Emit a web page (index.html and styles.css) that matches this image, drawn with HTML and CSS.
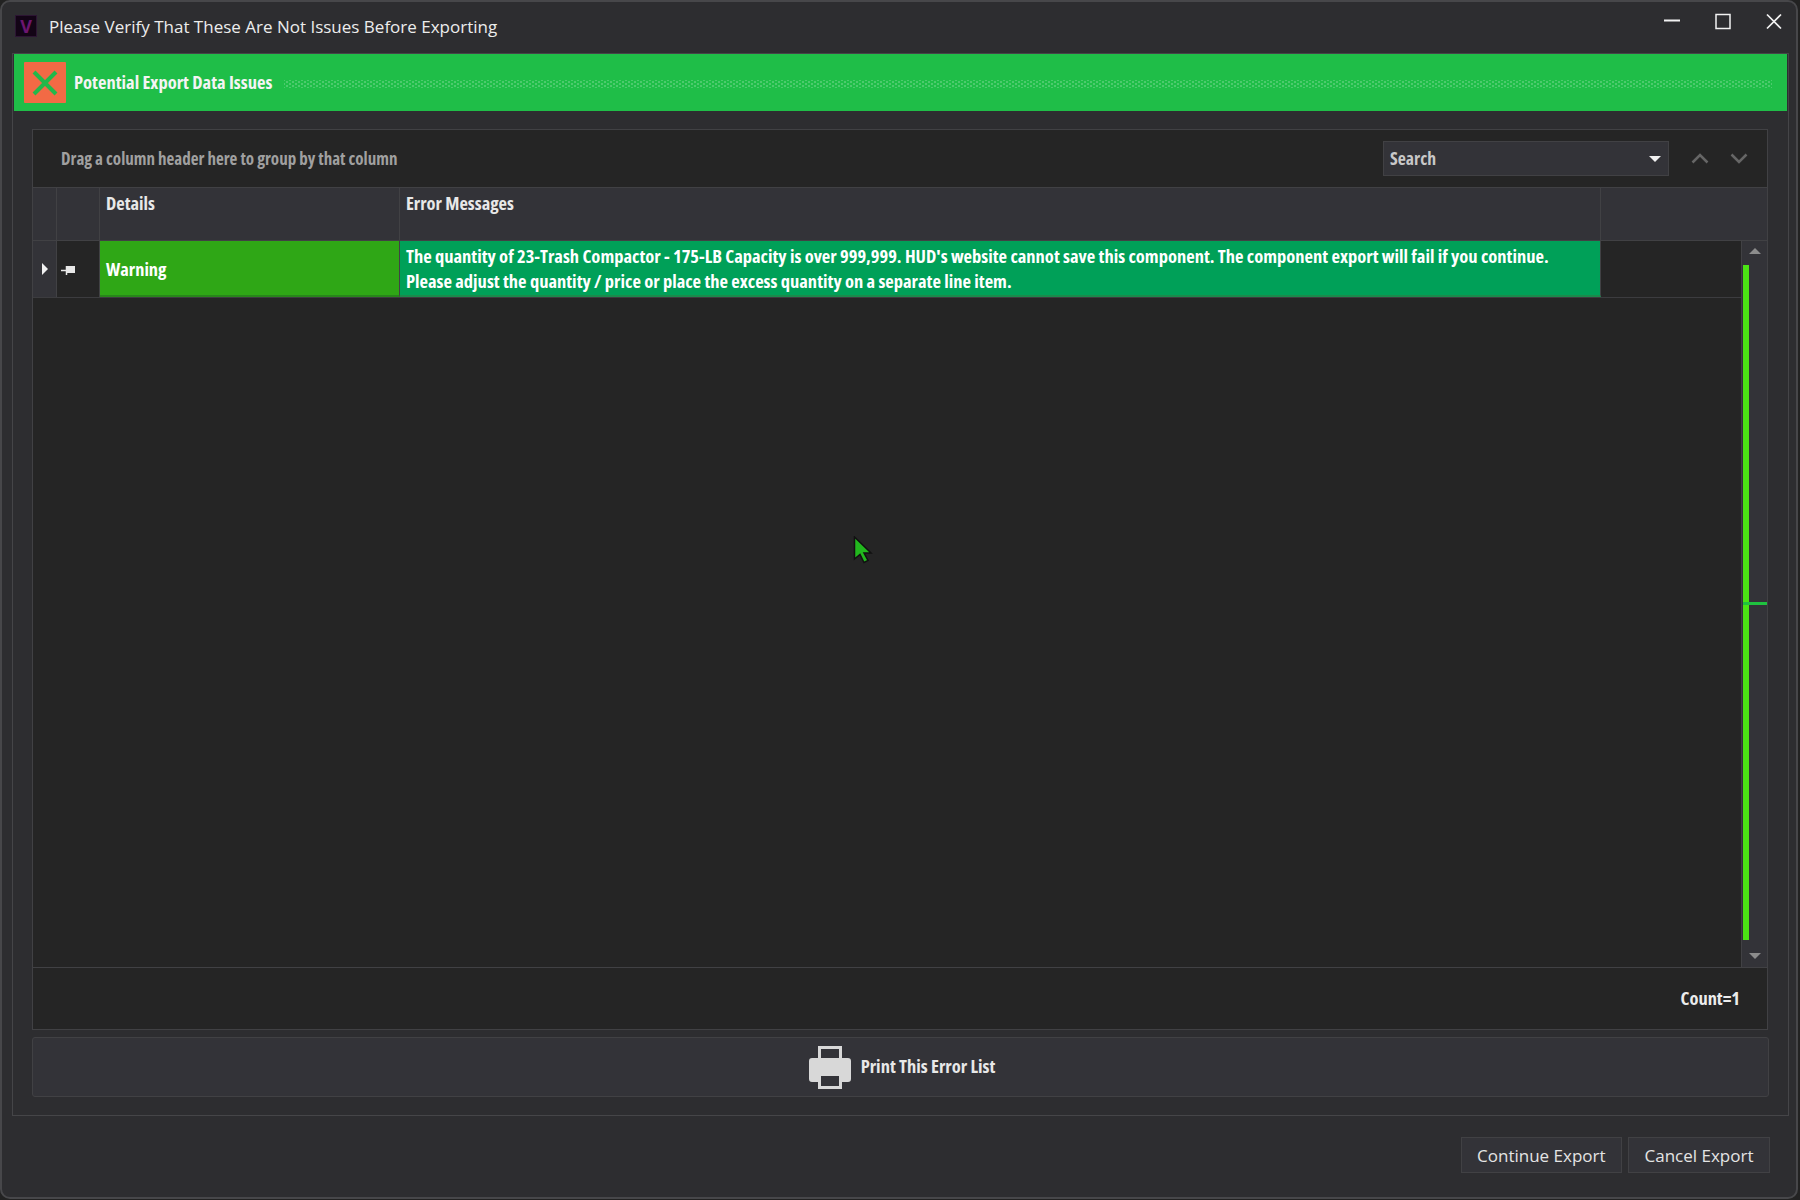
FILE: index.html
```html
<!DOCTYPE html>
<html lang="en">
<head>
  <meta charset="UTF-8">
  <meta name="viewport" content="width=device-width, initial-scale=1.0">
  <title>Please Verify That These Are Not Issues Before Exporting</title>
  <link rel="stylesheet" href="styles.css">
</head>
<body>
  <div class="window">
    <div class="titlebar">
      <div class="app-icon">V</div>
      <div class="title-text">Please Verify That These Are Not Issues Before Exporting</div>
      <div class="window-controls">
        <svg width="44" height="30" viewBox="0 0 44 30"><path d="M14 20.500h16" stroke="#f2f2f2" stroke-width="2"/></svg>
        <svg width="44" height="30" viewBox="0 0 44 30"><rect x="15" y="14.500" width="14" height="14" fill="none" stroke="#f2f2f2" stroke-width="1.500"/></svg>
        <svg width="44" height="30" viewBox="0 0 44 30"><path d="M15 14.500l14 14M29 14.500l-14 14" stroke="#f2f2f2" stroke-width="1.700"/></svg>
      </div>
    </div>

    <div class="content-panel">
      <div class="banner">
        <div class="banner-icon">
          <svg width="26" height="26" viewBox="0 0 26 26"><path d="M2 2l22 22M24 2L2 24" stroke="#22b84a" stroke-width="4"/></svg>
        </div>
        <div class="banner-title">Potential Export Data Issues</div>
        <div class="banner-dots"></div>
      </div>

      <div class="grid-panel">
        <div class="group-row">
          <span class="group-hint">Drag a column header here to group by that column</span>
          <div class="search-box">
            <span class="search-label">Search</span>
            <span class="search-caret"></span>
          </div>
          <div class="search-nav">
            <svg width="18" height="11" viewBox="0 0 18 11"><path d="M1.500 9.500L9 2l7.500 7.500" fill="none" stroke="#666" stroke-width="2.500"/></svg>
            <svg width="18" height="11" viewBox="0 0 18 11"><path d="M1.500 1.500L9 9l7.500-7.500" fill="none" stroke="#666" stroke-width="2.500"/></svg>
          </div>
        </div>

        <div class="grid-head">
          <div class="cell-expand"></div>
          <div class="cell-pin"></div>
          <div class="cell-details">Details</div>
          <div class="cell-message">Error Messages</div>
          <div class="cell-rest"></div>
        </div>

        <div class="grid-body">
          <div class="rows">
            <div class="row">
              <div class="cell-expand"><span class="expand-arrow"></span></div>
              <div class="cell-pin">
                <svg width="15" height="11" viewBox="0 0 15 11"><path d="M0 5.500h6M5.500 1v9" stroke="#e8e8e8" stroke-width="1.500"/><rect x="6" y="1" width="8" height="7" fill="#e8e8e8"/></svg>
              </div>
              <div class="cell-details warning">Warning</div>
              <div class="cell-message error">The quantity of 23-Trash Compactor - 175-LB Capacity is over 999,999. HUD's website cannot save this component. The component export will fail if you continue.<br>Please adjust the quantity / price or place the excess quantity on a separate line item.</div>
            </div>
          </div>
          <div class="scrollbar">
            <span class="scroll-up"></span>
            <div class="scroll-thumb"></div>
            <span class="scroll-down"></span>
            <div class="scroll-tick"></div>
          </div>
        </div>

        <div class="grid-foot">Count=1</div>
      </div>

      <button class="print-btn" type="button">
        <svg width="42" height="43" viewBox="0 0 42 43">
          <path d="M10.500 12V1.500h21V12" fill="none" stroke="#d8d8d8" stroke-width="3"/>
          <path d="M3 12h36a3 3 0 0 1 3 3v18a3 3 0 0 1-3 3h-6V27H9v9H3a3 3 0 0 1-3-3V15a3 3 0 0 1 3-3z" fill="#d8d8d8"/>
          <rect x="10.500" y="28.500" width="21" height="13" fill="none" stroke="#d8d8d8" stroke-width="3"/>
        </svg>
        <span class="print-label">Print This Error List</span>
      </button>
    </div>

    <div class="actions">
      <button class="action-btn" type="button">Continue Export</button>
      <button class="action-btn" type="button">Cancel Export</button>
    </div>
  </div>

  <!-- mouse pointer from the screenshot -->
  <svg class="cursor" width="20" height="28" viewBox="0 0 20 28"><path d="M1.500 1v22l5.500-4.500 4 8 4-2-4-7.500h7z" fill="#22b81e" stroke="#111" stroke-width="1.500"/></svg>
</body>
</html>
```

FILE: styles.css
```css
* {
  box-sizing: border-box;
}
body {
  margin: 0;
  height: 1200px;
  background-color: #222;
  font-family: 'Open Sans', 'Noto Sans', sans-serif;
  color: #f1f1f1;
  overflow: hidden;
}
.window {
  width: 1798px;
  height: 1199px;
  background-color: #2d2d30;
  border: 2px solid #47474a;
  border-radius: 10px;
  display: flex;
  flex-direction: column;
}
.titlebar {
  height: 51px;
  display: flex;
  align-items: center;
  padding-left: 13px;
  flex: none;
}
.app-icon {
  width: 22px;
  height: 22px;
  background-color: #130416;
  border: 1px solid #2c1533;
  color: #6c1570;
  font-weight: 700;
  font-size: 18px;
  line-height: 20px;
  text-align: center;
  margin-top: -3px;
}
.title-text {
  margin-left: 12px;
  font-size: 17px;
  color: #ececec;
  margin-top: -3px;
}
.window-controls {
  margin-left: auto;
  display: flex;
  align-self: flex-start;
  margin-top: -2px;
  height: 30px;
}
.window-controls svg {
  margin-left: 7px;
}
.content-panel {
  margin-left: 10px;
  width: 1777px;
  height: 1063px;
  border: 1px solid #454548;
  flex: none;
  display: flex;
  flex-direction: column;
}
.banner {
  height: 57px;
  width: 1773px;
  margin-left: 1px;
  background-color: #1fbe48;
  display: flex;
  align-items: center;
  padding-left: 10px;
  flex: none;
}
.banner-icon {
  width: 42px;
  height: 41px;
  background-color: #f26a45;
  border-radius: 1px;
  display: flex;
  align-items: center;
  justify-content: center;
}
.banner-title {
  margin: 0 0 2px 8px;
  font-size: 18.500px;
  font-weight: 700;
  font-stretch: 75%;
  color: #f4f4f4;
}
.banner-dots {
  flex: 1;
  height: 8px;
  margin: 2px 15px 0 12px;
  background-image:
    radial-gradient(circle, rgba(255, 255, 255, 0.2) 1px, transparent 1.2px),
    radial-gradient(circle, rgba(255, 255, 255, 0.2) 1px, transparent 1.2px);
  background-size: 6px 4px;
  background-position: 0 0, 3px 2px;
}
.grid-panel {
  margin: 18px 0 0 19px;
  width: 1736px;
  height: 901px;
  background-color: #252525;
  border: 1px solid #414144;
  display: flex;
  flex-direction: column;
  flex: none;
  font-weight: 700;
  font-stretch: 75%;
  font-size: 18.400px;
}
.group-row {
  height: 57px;
  display: flex;
  align-items: center;
  padding-left: 28px;
  flex: none;
}
.group-hint {
  color: #a0a0a0;
  font-size: 17px;
}
.search-box {
  margin-left: auto;
  width: 286px;
  height: 35px;
  background-color: #333338;
  border: 1px solid #414144;
  display: flex;
  align-items: center;
  justify-content: space-between;
  padding: 0 7px 0 6px;
  color: #c8c8c8;
  font-size: 17.700px;
}
.search-label {
  margin-bottom: 2px;
}
.search-caret {
  border-left: 6px solid transparent;
  border-right: 6px solid transparent;
  border-top: 6px solid #f1f1f1;
}
.search-nav {
  display: flex;
  gap: 21px;
  margin: 0 19px 0 22px;
}
.grid-head {
  height: 54px;
  display: flex;
  flex: none;
  background-color: #333338;
  border-top: 1px solid #414144;
  border-bottom: 1px solid #414144;
}
.cell-expand {
  width: 24px;
  flex: none;
  border-right: 1px solid #414144;
  background-color: #333338;
  display: flex;
  align-items: center;
  justify-content: center;
}
.cell-pin {
  width: 43px;
  flex: none;
  border-right: 1px solid #414144;
  display: flex;
  align-items: center;
  padding: 2px 0 0 4px;
}
.cell-details {
  width: 300px;
  flex: none;
  padding-left: 6px;
  border-right: 1px solid #414144;
}
.cell-message {
  width: 1201px;
  flex: none;
  padding-left: 6px;
  border-right: 1px solid #414144;
}
.grid-head .cell-details,
.grid-head .cell-message {
  padding-top: 3px;
  line-height: 24px;
  color: #e8e8e8;
}
.cell-rest {
  flex: 1;
}
.grid-body {
  flex: 1;
  display: flex;
  position: relative;
  min-height: 0;
}
.rows {
  flex: 1;
}
.row {
  display: flex;
  height: 57px;
  border-bottom: 1px solid #3c3c3f;
}
.warning {
  background-color: #2fa716;
  display: flex;
  align-items: center;
  color: #fff;
  border-right: 1px solid #414144;
  border-bottom: 2px solid #28861a;
}
.error {
  background-color: #00a058;
  color: #fff;
  padding-top: 2px;
  line-height: 25px;
  font-size: 18.500px;
  border-bottom: 2px solid #1b8a4c;
  white-space: nowrap;
}
.expand-arrow {
  border-top: 6px solid transparent;
  border-bottom: 6px solid transparent;
  border-left: 6px solid #f1f1f1;
}
.scrollbar {
  width: 26px;
  flex: none;
  background-color: #333338;
  border-left: 1px solid #414144;
  display: flex;
  flex-direction: column;
  align-items: flex-start;
  position: relative;
}
.scroll-up,
.scroll-down {
  margin-left: 7px;
  border-left: 6px solid transparent;
  border-right: 6px solid transparent;
}
.scroll-up {
  margin-top: 7px;
  border-bottom: 6px solid #8c8c8c;
}
.scroll-down {
  margin-top: 13px;
  border-top: 6px solid #8c8c8c;
}
.scroll-thumb {
  width: 6px;
  height: 675px;
  margin: 11px 0 0 1px;
  background-color: #4be414;
}
.scroll-tick {
  position: absolute;
  left: 1px;
  right: 0;
  top: 361px;
  height: 3px;
  background-color: #1fc23f;
}
.grid-foot {
  height: 62px;
  flex: none;
  border-top: 1px solid #414144;
  display: flex;
  align-items: center;
  justify-content: flex-end;
  padding: 0 27px 3px 0;
  color: #ececec;
}
.print-btn {
  margin: 7px 0 0 19px;
  width: 1737px;
  height: 60px;
  flex: none;
  background-color: #333338;
  border: 1px solid #414144;
  border-radius: 3px;
  padding: 0 0 0 3px;
  font-family: inherit;
  font-weight: 700;
  font-stretch: 75%;
  font-size: 18.500px;
  color: #e8e8e8;
  display: flex;
  align-items: center;
  justify-content: center;
  gap: 10px;
}
.print-label {
  margin-bottom: 3px;
}
.actions {
  flex: 1;
  display: flex;
  justify-content: flex-end;
  align-items: flex-start;
  gap: 6px;
  padding: 21px 26px 0 0;
}
.action-btn {
  height: 36px;
  padding: 0 15.500px;
  background-color: #333338;
  border: 1px solid #414144;
  font-family: inherit;
  font-size: 17px;
  color: #e4e4e4;
}
.cursor {
  position: absolute;
  left: 853px;
  top: 536px;
}
```
